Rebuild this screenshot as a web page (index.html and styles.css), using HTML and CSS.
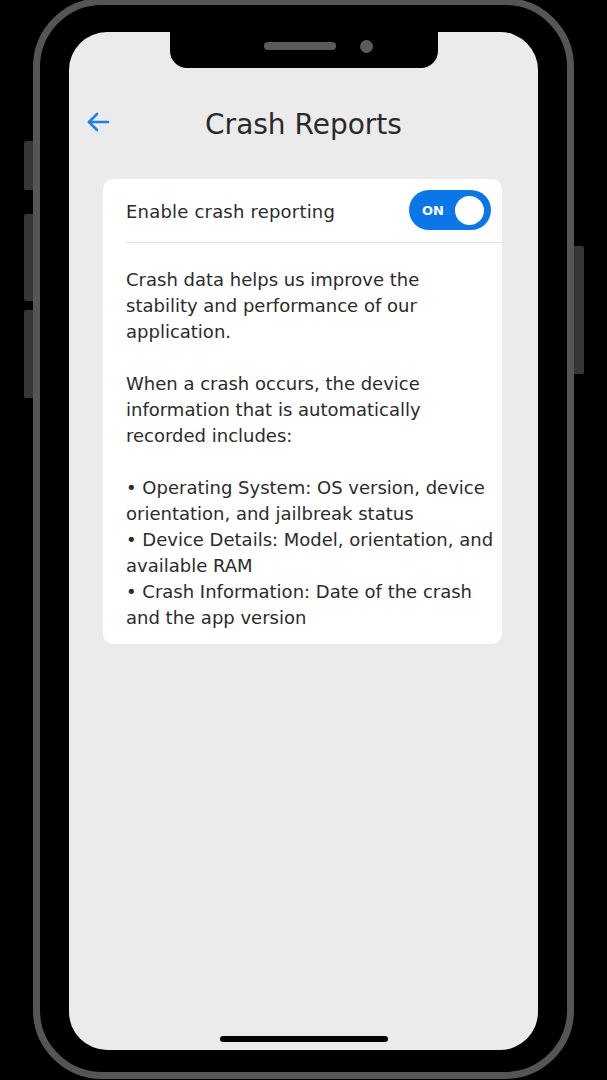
FILE: index.html
```html
<!DOCTYPE html>
<html lang="en">
<head>
<meta charset="utf-8">
<title>Crash Reports</title>
<link rel="stylesheet" href="styles.css">
</head>
<body>
<div class="stage">
  <div class="side-btn btn-l1"></div>
  <div class="side-btn btn-l2"></div>
  <div class="side-btn btn-l3"></div>
  <div class="side-btn btn-r1"></div>
  <div class="phone">
    <div class="screen">
      <div class="notch">
        <span class="speaker"></span>
        <span class="camera"></span>
      </div>
      <header class="header">
        <button class="back" aria-label="Back">
          <svg width="24" height="22" viewBox="0 0 24 22" fill="none" stroke="#1f80e4" stroke-width="2.6" stroke-linecap="round" stroke-linejoin="round"><path d="M22 11H3"/><path d="M11 3L3 11L11 19"/></svg>
        </button>
        <h1 class="title">Crash Reports</h1>
        <span class="spacer"></span>
      </header>
      <section class="card">
        <div class="row">
          <span class="row-label">Enable crash reporting</span>
          <div class="toggle"><span class="toggle-text">ON</span><span class="knob"></span></div>
        </div>
        <div class="info">
          <p>Crash data helps us improve the<br>stability and performance of our<br>application.</p>
          <p>When a crash occurs, the device<br>information that is automatically<br>recorded includes:</p>
          <ul class="list">
            <li>• Operating System: OS version, device<br>orientation, and jailbreak status</li>
            <li>• Device Details: Model, orientation, and<br>available RAM</li>
            <li>• Crash Information: Date of the crash<br>and the app version</li>
          </ul>
        </div>
      </section>
      <div class="home-bar"></div>
    </div>
  </div>
</div>
</body>
</html>
```
FILE: styles.css
```css
* { box-sizing: border-box; }
html, body { margin: 0; padding: 0; }
body {
  background: #000;
  width: 607px;
  height: 1080px;
  overflow: hidden;
  font-family: "DejaVu Sans", "Open Sans", sans-serif;
}
.stage {
  position: relative;
  width: 607px;
  height: 1080px;
}
.side-btn {
  position: absolute;
  background: #363636;
  border-radius: 2px;
}
.btn-l1 { left: 24px; top: 143px; width: 12px; height: 49px; }
.btn-l2 { left: 24px; top: 216px; width: 12px; height: 87px; }
.btn-l3 { left: 24px; top: 312px; width: 12px; height: 88px; }
.btn-r1 { left: 571px; top: 248px; width: 13px; height: 128px; }

.phone {
  position: relative;
  margin: -2px 0 0 33px;
  width: 541px;
  height: 1081px;
  border: 7px solid #555555;
  border-radius: 69px;
  background: #000;
  padding: 27px 29px 22px 29px;
}
.screen {
  position: relative;
  height: 100%;
  background: #ebebeb;
  border-radius: 38px;
  overflow: hidden;
  display: flex;
  flex-direction: column;
}
.notch {
  position: absolute;
  top: 0;
  left: 101px;
  width: 268px;
  height: 36px;
  background: #000;
  border-radius: 0 0 17px 17px;
}
.speaker {
  position: absolute;
  left: 94px;
  top: 10px;
  width: 72px;
  height: 8px;
  border-radius: 4px;
  background: #5a5a5a;
}
.camera {
  position: absolute;
  left: 190px;
  top: 8px;
  width: 13px;
  height: 13px;
  border-radius: 50%;
  background: #5a5a5a;
}
.header {
  margin-top: 64px;
  height: 56px;
  display: grid;
  grid-template-columns: 60px 1fr 60px;
  align-items: center;
}
.back {
  border: 0;
  background: none;
  padding: 0 0 0 17px;
  margin: 0;
  display: flex;
  align-items: center;
  height: 40px;
  margin-top: -4px;
}
.title {
  margin: 0;
  text-align: center;
  font-size: 28px;
  font-weight: 400;
  color: #2a2a2a;
}
.card {
  margin: 27px 36px 0 34px;
  background: #fff;
  border-radius: 10px;
}
.row {
  margin-left: 23px;
  padding: 11px 11px 12px 0;
  border-bottom: 1px solid #e4e4e4;
  display: flex;
  align-items: center;
  justify-content: space-between;
}
.row-label {
  font-size: 18px;
  color: #2b2b2b;
  letter-spacing: 0.2px;
  margin-top: 2px;
}
.toggle {
  width: 82px;
  height: 40px;
  border-radius: 20px;
  background: #0b76e8;
  display: flex;
  align-items: center;
  justify-content: space-between;
  padding: 0 7px 0 13px;
}
.toggle-text {
  color: #fff;
  font-size: 13px;
  font-weight: 700;
}
.knob {
  width: 29px;
  height: 29px;
  border-radius: 50%;
  background: #fff;
}
.info {
  margin-left: 23px;
  padding: 24px 0 13px 0;
  font-size: 18px;
  line-height: 26px;
  color: #2b2b2b;
  white-space: nowrap;
}
.info p { margin: 0 0 26px 0; }
.list { list-style: none; margin: 0; padding: 0; }
.home-bar {
  margin-top: auto;
  margin-bottom: 8px;
  align-self: center;
  width: 168px;
  height: 6px;
  border-radius: 3px;
  background: #000;
}
```
